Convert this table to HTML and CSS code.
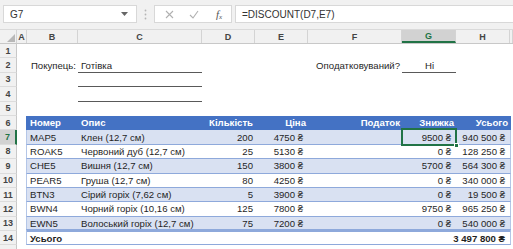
FILE: index.html
```html
<!DOCTYPE html>
<html lang="uk">
<head>
<meta charset="utf-8">
<link rel="stylesheet" href="styles.css">
</head>
<body>
<div class="app">
  <div class="fbar">
    <div class="namebox"><span>G7</span><svg class="dd" width="7" height="4" viewBox="0 0 7 4"><path d="M0 0h7L3.5 4z" fill="#666"/></svg></div>
    <div class="grip"><svg width="3" height="11" viewBox="0 0 3 11"><circle cx="1.5" cy="1.5" r="0.9" fill="#b5b5b5"/><circle cx="1.5" cy="5.5" r="0.9" fill="#b5b5b5"/><circle cx="1.5" cy="9.5" r="0.9" fill="#b5b5b5"/></svg></div>
    <div class="btns">
      <svg class="ico" width="9" height="9" viewBox="0 0 9 9"><path d="M1 1l7 7M8 1l-7 7" stroke="#b0b0b0" stroke-width="1.1"/></svg>
      <svg class="ico" width="10" height="9" viewBox="0 0 10 9"><path d="M1 5l3 3 5-7" stroke="#b0b0b0" stroke-width="1.1" fill="none"/></svg>
      <span class="fx">f<sub>x</sub></span>
    </div>
    <div class="formula">=DISCOUNT(D7,E7)</div>
  </div>

  <div class="sheet">
    <div class="row hdr">
      <div class="corner"><svg width="8" height="8" viewBox="0 0 8 8"><path d="M8 0v8H0z" fill="#b8b8b8"/></svg></div>
      <div class="ch">A</div><div class="ch">B</div><div class="ch">C</div><div class="ch">D</div><div class="ch">E</div><div class="ch">F</div><div class="ch sel-h">G</div><div class="ch">H</div><div class="ch"></div>
    </div>

    <div class="row"><div class="rh">1</div></div>
    <div class="row">
      <div class="rh">2</div><div></div>
      <div class="c r lbl">Покупець:</div>
      <div class="c line">Готівка</div>
      <div></div><div></div>
      <div class="c r lbl2">Оподатковуваний?</div>
      <div class="c mid line">Ні</div>
    </div>
    <div class="row"><div class="rh">3</div><div></div><div></div><div class="c line"></div></div>
    <div class="row"><div class="rh">4</div><div></div><div></div><div class="c line"></div></div>
    <div class="row"><div class="rh">5</div></div>

    <div class="row">
      <div class="rh">6</div><div></div>
      <div class="trow thead">
        <div class="c">Номер</div><div class="c">Опис</div><div class="c r">Кількість</div><div class="c r">Ціна</div><div class="c r">Податок</div><div class="c r">Знижка</div><div class="c r">Усього</div>
      </div>
    </div>

    <div class="row">
      <div class="rh sel-r">7</div><div></div>
      <div class="trow band">
        <div class="c">MAP5</div><div class="c">Клен (12,7 см)</div><div class="c r">200</div><div class="c r m">4750 ₴</div><div class="c"></div><div class="c r m sel">9500 ₴</div><div class="c r m">940 500 ₴</div>
      </div>
    </div>
    <div class="row">
      <div class="rh">8</div><div></div>
      <div class="trow">
        <div class="c">ROAK5</div><div class="c">Червоний дуб (12,7 см)</div><div class="c r">25</div><div class="c r m">5130 ₴</div><div class="c"></div><div class="c r m">0 ₴</div><div class="c r m">128 250 ₴</div>
      </div>
    </div>
    <div class="row">
      <div class="rh">9</div><div></div>
      <div class="trow band">
        <div class="c">CHE5</div><div class="c">Вишня (12,7 см)</div><div class="c r">150</div><div class="c r m">3800 ₴</div><div class="c"></div><div class="c r m">5700 ₴</div><div class="c r m">564 300 ₴</div>
      </div>
    </div>
    <div class="row">
      <div class="rh">10</div><div></div>
      <div class="trow">
        <div class="c">PEAR5</div><div class="c">Груша (12,7 см)</div><div class="c r">80</div><div class="c r m">4250 ₴</div><div class="c"></div><div class="c r m">0 ₴</div><div class="c r m">340 000 ₴</div>
      </div>
    </div>
    <div class="row">
      <div class="rh">11</div><div></div>
      <div class="trow band">
        <div class="c">BTN3</div><div class="c">Сірий горіх (7,62 см)</div><div class="c r">5</div><div class="c r m">3900 ₴</div><div class="c"></div><div class="c r m">0 ₴</div><div class="c r m">19 500 ₴</div>
      </div>
    </div>
    <div class="row">
      <div class="rh">12</div><div></div>
      <div class="trow">
        <div class="c">BWN4</div><div class="c">Чорний горіх (10,16 см)</div><div class="c r">125</div><div class="c r m">7800 ₴</div><div class="c"></div><div class="c r m">9750 ₴</div><div class="c r m">965 250 ₴</div>
      </div>
    </div>
    <div class="row">
      <div class="rh">13</div><div></div>
      <div class="trow band">
        <div class="c">EWN5</div><div class="c">Волоський горіх (12,7 см)</div><div class="c r">75</div><div class="c r m">7200 ₴</div><div class="c"></div><div class="c r m">0 ₴</div><div class="c r m">540 000 ₴</div>
      </div>
    </div>
    <div class="row">
      <div class="rh">14</div><div></div>
      <div class="trow total">
        <div class="c">Усього</div><div class="c"></div><div class="c"></div><div class="c"></div><div class="c"></div><div class="c"></div><div class="c r m">3 497 800 ₴</div>
      </div>
    </div>
    <div class="row"><div class="rh"></div></div>
  </div>
</div>
</body>
</html>
```

FILE: styles.css
```css
html, body {
  margin: 0;
  padding: 0;
  background: #fff;
}
.app {
  width: 513px;
  height: 249px;
  overflow: hidden;
  font-family: "Liberation Sans", Arial, sans-serif;
  font-size: 9.6px;
  color: #1f1f1f;
}
.fbar {
  height: 30px;
  box-sizing: border-box;
  background: #f1f1f1;
  display: flex;
  align-items: flex-start;
  padding-top: 5px;
  border-bottom: 1px solid #dadada;
}
.namebox {
  margin-left: 3px;
  width: 134px;
  height: 18px;
  box-sizing: border-box;
  background: #fff;
  border: 1px solid #d8d8d8;
  display: flex;
  align-items: center;
  justify-content: space-between;
  padding: 0 8px 0 6px;
  font-size: 10px;
  color: #333;
}
.grip {
  width: 17px;
  height: 18px;
  display: flex;
  align-items: center;
  justify-content: center;
}
.btns {
  width: 78px;
  height: 18px;
  box-sizing: border-box;
  background: #fff;
  border: 1px solid #d8d8d8;
  display: flex;
  align-items: center;
  padding-left: 10px;
  gap: 15px;
}
.fx {
  font-family: "Liberation Serif", serif;
  font-style: italic;
  font-size: 11px;
  color: #555;
  margin-left: 2px;
}
.fx sub {
  font-size: 7px;
  vertical-align: -1px;
}
.formula {
  margin-left: 3px;
  flex: 1;
  height: 18px;
  box-sizing: border-box;
  background: #fff;
  border: 1px solid #d8d8d8;
  border-right: none;
  display: flex;
  align-items: center;
  padding-left: 6px;
  font-size: 10px;
  color: #333;
}
.sheet {
  display: flex;
  flex-direction: column;
}
.row {
  display: grid;
  grid-template-columns: 17px 10px 51px 124px 53px 53px 94px 54px 54px 3px;
  height: 14.4px;
  box-sizing: border-box;
}
.row.hdr {
  height: 14px;
  background: #f1f1f1;
  border-bottom: 1px solid #c8c8c8;
}
.corner {
  display: flex;
  align-items: flex-end;
  justify-content: flex-end;
  padding: 0 1px 1px 0;
  border-right: 1px solid #d4d4d4;
}
.ch {
  display: flex;
  align-items: center;
  justify-content: center;
  border-right: 1px solid #d4d4d4;
  font-size: 9px;
  font-weight: bold;
  color: #444;
}
.ch.sel-h {
  background: #d2d2d2;
  color: #217346;
  border-bottom: 2px solid #217346;
}
.rh {
  background: #f1f1f1;
  border-right: 1px solid #c8c8c8;
  border-bottom: 1px solid #dcdcdc;
  box-sizing: border-box;
  display: flex;
  align-items: center;
  justify-content: center;
  font-size: 9px;
  font-weight: bold;
  color: #444;
}
.rh.sel-r {
  background: #d2d2d2;
  color: #217346;
  border-right: 2px solid #217346;
}
.c {
  display: flex;
  align-items: center;
  padding: 0 2px 0 3px;
  white-space: nowrap;
  box-sizing: border-box;
  min-width: 0;
}
.c.r {
  justify-content: flex-end;
  padding: 0 2px 0 0;
}
.c.m {
  padding-right: 5px;
}
.c.mid {
  justify-content: center;
}
.lbl {
  padding-right: 1px;
}
.lbl2 {
  padding-right: 4px;
}
.line {
  border-bottom: 1px solid #595959;
}
.trow {
  grid-column: 3 / 10;
  display: grid;
  grid-template-columns: 51px 124px 53px 53px 94px 54px 54px;
  box-sizing: border-box;
  border-left: 1px solid #b4c6e7;
  border-right: 1px solid #b4c6e7;
  border-bottom: 1px solid #8ea9db;
  margin-left: -1px;
  margin-right: -1px;
}
.trow.thead {
  background: #4472c4;
  border-color: #4472c4;
  color: #fff;
  font-weight: bold;
}
.trow.band {
  background: #d9e1f2;
}
.trow.total {
  border-top: 3px double #8ea9db;
  margin-top: -2px;
  font-weight: bold;
  height: calc(100% + 2px);
}
.sel {
  position: relative;
}
.sel::after {
  content: "";
  position: absolute;
  left: -1px;
  top: -2px;
  right: -1px;
  bottom: -2px;
  border: 2px solid #217346;
}
.sel::before {
  content: "";
  position: absolute;
  right: -3px;
  bottom: -4px;
  width: 5px;
  height: 5px;
  background: #217346;
  border: 1px solid #fff;
  box-sizing: border-box;
  z-index: 2;
}
```
